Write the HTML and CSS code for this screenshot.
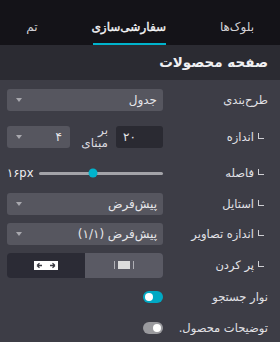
FILE: index.html
```html
<!DOCTYPE html>
<html lang="fa" dir="rtl">
<head>
<meta charset="utf-8">
<link rel="stylesheet" href="styles.css">
</head>
<body>
<div class="panel">
  <nav class="tabs">
    <span class="tab t1">بلوک‌ها</span>
    <span class="tab t2 active">سفارشی‌سازی</span>
    <span class="tab t3">تم</span>
  </nav>
  <div class="section-title">صفحه محصولات</div>
  <div class="options">
    <div class="row r1">
      <div class="label">طرح‌بندی</div>
      <div class="ctrl"><div class="select"><span>جدول</span><i class="caret"></i></div></div>
    </div>
    <div class="row r2">
      <div class="label sub">اندازه</div>
      <div class="ctrl">
        <div class="num">۲۰</div>
        <div class="per">بر<br>مبنای</div>
        <div class="select small"><span>۴</span><i class="caret"></i></div>
      </div>
    </div>
    <div class="row r3">
      <div class="label sub">فاصله</div>
      <div class="ctrl">
        <div class="track"><span class="knob" style="left: 43.5%"></span></div>
        <span class="val" dir="ltr">۱۶px</span>
      </div>
    </div>
    <div class="row r4">
      <div class="label sub">استایل</div>
      <div class="ctrl"><div class="select"><span>پیش‌فرض</span><i class="caret"></i></div></div>
    </div>
    <div class="row r5">
      <div class="label sub">اندازه تصاویر</div>
      <div class="ctrl"><div class="select"><span>پیش‌فرض (۱/۱)</span><i class="caret"></i></div></div>
    </div>
    <div class="row r6">
      <div class="label sub">پر کردن</div>
      <div class="ctrl">
        <div class="btns">
          <div class="btn light">
            <svg width="22" height="10" viewBox="0 0 22 10"><rect x="1" y="1" width="1" height="8" fill="#b0b0b6"/><rect x="5" y="1" width="12" height="8" fill="#dcdcdc"/><rect x="20" y="1" width="1" height="8" fill="#b0b0b6"/></svg>
          </div>
          <div class="btn dark">
            <svg width="24" height="9" viewBox="0 0 24 9"><rect x="0" y="0" width="24" height="9" fill="#ffffff"/><path d="M3 4.5h5M3 4.5l2.5-2.2M3 4.5l2.5 2.2M21 4.5h-5M21 4.5l-2.5-2.2M21 4.5l-2.5 2.2" stroke="#3a3a42" stroke-width="1.3" fill="none"/></svg>
          </div>
        </div>
      </div>
    </div>
    <div class="row r7">
      <div class="label">نوار جستجو</div>
      <div class="ctrl"><span class="toggle on"><i></i></span></div>
    </div>
    <div class="row r8">
      <div class="label">توضیحات محصول.</div>
      <div class="ctrl"><span class="toggle off"><i></i></span></div>
    </div>
  </div>
</div>
</body>
</html>
```
FILE: styles.css
```css
* { box-sizing: border-box; }
html, body { margin: 0; padding: 0; }
body {
  width: 280px;
  height: 342px;
  overflow: hidden;
  background: #3d3d46;
  font-family: "DejaVu Sans", "Noto Sans", sans-serif;
  color: #dedee2;
  direction: rtl;
}
.panel { width: 280px; }
.tabs {
  display: flex;
  height: 45px;
  background: #141318;
}
.tab {
  height: 45px;
  padding-top: 19px;
  font-size: 12px;
  line-height: 16px;
  color: #d2d2d6;
  white-space: nowrap;
  text-align: center;
}
.t1 { width: 86px; margin-left: 28px; }
.t2 {
  width: 73px;
  margin-left: 29px;
  color: #f4f4f6;
  -webkit-text-stroke: 0.35px #f4f4f6;
  border-bottom: 2px solid #00b3cc;
}
.t3 { width: 64px; }
.section-title {
  height: 35px;
  line-height: 35px;
  background: #2b2b32;
  padding-right: 12px;
  font-size: 13.5px;
  font-weight: bold;
  color: #f0f0f2;
}
.options { padding: 4px 12px 0 7px; }
.row { display: flex; align-items: center; }
.r1 { height: 32px; }
.r2 { height: 42px; }
.r3 { height: 30px; }
.r4 { height: 31px; }
.r5 { height: 30px; }
.r6 { height: 32px; }
.r7 { height: 32px; }
.r8 { height: 30px; }
.label {
  flex: 1;
  font-size: 11.5px;
  color: #e2e2e6;
  white-space: nowrap;
}
.label.sub { padding-right: 14px; position: relative; }
.label.sub::before {
  content: "";
  position: absolute;
  right: 4px;
  top: 3px;
  width: 5px;
  height: 5px;
  border-left: 1px solid #d0d0d4;
  border-bottom: 1px solid #d0d0d4;
}
.ctrl { width: 156px; display: flex; align-items: center; }
.select {
  flex: 1;
  height: 22px;
  background: #56565f;
  border-radius: 3px;
  display: flex;
  align-items: center;
  padding: 0 6px 0 9px;
  font-size: 12px;
  color: #e6e6ea;
}
.select.small { flex: 0 0 63px; margin-right: auto; padding-right: 8px; }
.caret {
  margin-right: auto;
  width: 0;
  height: 0;
  border-left: 3px solid transparent;
  border-right: 3px solid transparent;
  border-top: 4px solid #a8a8ae;
}
.num {
  width: 47px;
  height: 22px;
  background: #2a2a32;
  border-radius: 3px;
  font-size: 12px;
  line-height: 22px;
  text-align: left;
  padding-left: 7px;
  color: #e6e6ea;
}
.per {
  margin-right: 8px;
  font-size: 12px;
  line-height: 13px;
  color: #dcdce0;
}
.track {
  flex: 1;
  height: 3px;
  background: #a3a3a8;
  border-radius: 2px;
  position: relative;
}
.knob {
  position: absolute;
  top: 50%;
  width: 9px;
  height: 9px;
  border-radius: 50%;
  background: #00b3cc;
  transform: translate(-50%, -50%);
}
.val { margin-right: 9px; font-size: 11.5px; color: #f0f0f2; width: 23px; }
.btns {
  flex: 1;
  height: 25px;
  display: flex;
  border-radius: 4px;
  overflow: hidden;
}
.btn { flex: 1; display: flex; align-items: center; justify-content: center; }
.btn svg { display: block; }
.btn.light { background: #5a5a64; }
.btn.dark { background: #2b2b35; }
.toggle {
  width: 20px;
  height: 12px;
  border-radius: 6px;
  display: flex;
  align-items: center;
  padding: 0 2px;
}
.toggle i { width: 8px; height: 8px; border-radius: 50%; background: #ffffff; }
.toggle.on { background: #00a9c4; justify-content: flex-end; }
.toggle.off { background: #9a9a9e; justify-content: flex-start; }
```
